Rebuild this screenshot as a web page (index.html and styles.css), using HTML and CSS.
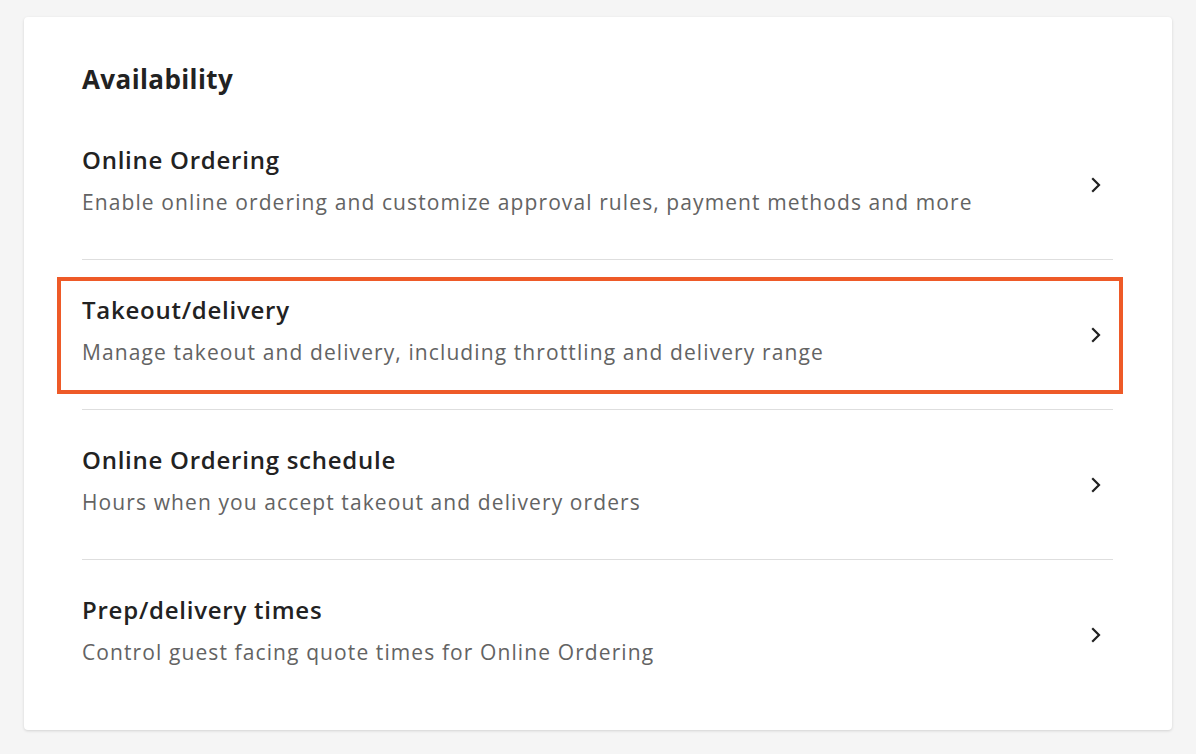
FILE: index.html
```html
<!DOCTYPE html>
<html>
<head>
<meta charset="utf-8">
<link rel="stylesheet" href="styles.css">
</head>
<body>
<div class="card">
  <h2 class="card-title">Availability</h2>
  <div class="list">
    <a class="row">
      <div class="row-text">
        <div class="row-title">Online Ordering</div>
        <div class="row-desc">Enable online ordering and customize approval rules, payment methods and more</div>
      </div>
      <svg class="chev" width="10" height="16" viewBox="0 0 10 16"><polyline points="2,2 8,8 2,14" fill="none" stroke="#222" stroke-width="2.2" stroke-linecap="square"/></svg>
    </a>
    <a class="row highlight">
      <div class="row-text">
        <div class="row-title">Takeout/delivery</div>
        <div class="row-desc">Manage takeout and delivery, including throttling and delivery range</div>
      </div>
      <svg class="chev" width="10" height="16" viewBox="0 0 10 16"><polyline points="2,2 8,8 2,14" fill="none" stroke="#222" stroke-width="2.2" stroke-linecap="square"/></svg>
    </a>
    <a class="row">
      <div class="row-text">
        <div class="row-title">Online Ordering schedule</div>
        <div class="row-desc">Hours when you accept takeout and delivery orders</div>
      </div>
      <svg class="chev" width="10" height="16" viewBox="0 0 10 16"><polyline points="2,2 8,8 2,14" fill="none" stroke="#222" stroke-width="2.2" stroke-linecap="square"/></svg>
    </a>
    <a class="row">
      <div class="row-text">
        <div class="row-title">Prep/delivery times</div>
        <div class="row-desc">Control guest facing quote times for Online Ordering</div>
      </div>
      <svg class="chev" width="10" height="16" viewBox="0 0 10 16"><polyline points="2,2 8,8 2,14" fill="none" stroke="#222" stroke-width="2.2" stroke-linecap="square"/></svg>
    </a>
  </div>
</div>
</body>
</html>
```
FILE: styles.css
```css
html, body {
  margin: 0;
  padding: 0;
}
body {
  background: #f5f5f5;
  font-family: "Open Sans", Lato, sans-serif;
  padding: 17px 24px 24px;
  box-sizing: border-box;
  height: 754px;
}
.card {
  background: #fff;
  border-radius: 4px;
  box-shadow: 0 1px 3px rgba(0,0,0,0.14);
  width: 1148px;
  height: 713px;
  box-sizing: border-box;
  padding: 44px 59px 0 58px;
}
.card-title {
  margin: 0;
  font-size: 26px;
  line-height: 36px;
  font-weight: 700;
  color: #222;
  letter-spacing: 0.4px;
}
.list {
  margin-top: 13px;
  display: flex;
  flex-direction: column;
}
.row {
  display: flex;
  align-items: center;
  height: 149px;
  border-bottom: 1px solid #dedede;
  position: relative;
  color: inherit;
  text-decoration: none;
}
.row:last-child {
  border-bottom: none;
}
.row-text {
  flex: 1;
  display: flex;
  flex-direction: column;
  gap: 13px;
  margin-bottom: 8px;
}
.row-title {
  font-size: 24px;
  line-height: 30px;
  font-weight: 600;
  color: #222;
  letter-spacing: 0.75px;
}
.row-desc {
  font-size: 21px;
  line-height: 28px;
  color: #636363;
  letter-spacing: 1.1px;
}
.chev {
  margin-right: 12px;
  flex: none;
}
.highlight::after {
  content: "";
  position: absolute;
  left: -25px;
  right: -10px;
  top: 17px;
  bottom: 15px;
  border: 4.5px solid #ee5a28;
  pointer-events: none;
}
```
